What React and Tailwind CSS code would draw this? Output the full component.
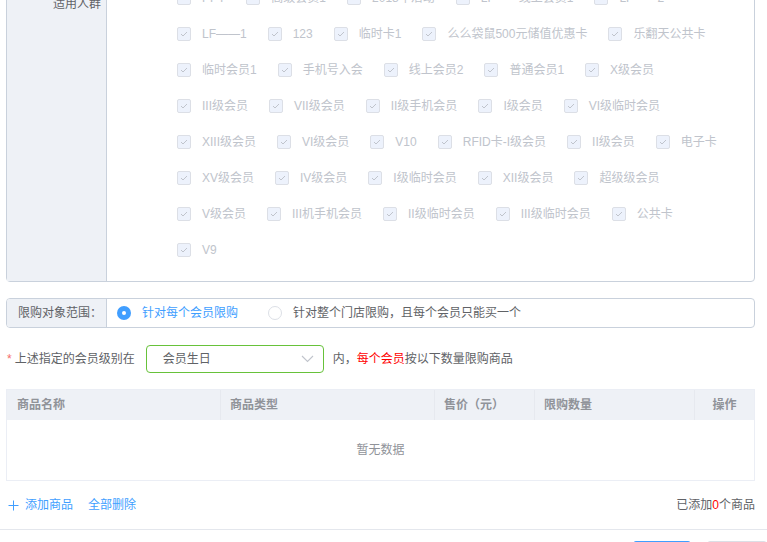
const FONT = { fontFamily: '"Liberation Sans", "Noto Sans CJK SC", sans-serif' };

const rows = [
  ["PPT", "高级会员1", "2018年活动", "LF——线上会员1", "LF——2"],
  ["LF——1", "123", "临时卡1", "么么袋鼠500元储值优惠卡", "乐翻天公共卡"],
  ["临时会员1", "手机号入会", "线上会员2", "普通会员1", "X级会员"],
  ["III级会员", "VII级会员", "II级手机会员", "I级会员", "VI级临时会员"],
  ["XIII级会员", "VI级会员", "V10", "RFID卡-I级会员", "II级会员", "电子卡"],
  ["XV级会员", "IV级会员", "I级临时会员", "XII级会员", "超级级会员"],
  ["V级会员", "III机手机会员", "II级临时会员", "III级临时会员", "公共卡"],
  ["V9"],
];

const Check = ({ label }) => (
  <div className="flex items-center mr-[21px] shrink-0">
    <span className="w-[14px] h-[14px] rounded-[2px] border border-[#dcdfe6] bg-[#edf2fc] flex items-center justify-center">
      <svg width="8" height="6" viewBox="0 0 8 6" fill="none">
        <path d="M1 3l2 2 4-4" stroke="#c0c4cc" strokeWidth="1" />
      </svg>
    </span>
    <span className="ml-[11px] text-[12px] leading-[16px] text-[#c0c4cc] whitespace-nowrap">
      {label}
    </span>
  </div>
);

export default function App() {
  return (
    <div className="w-[767px] h-[542px] overflow-hidden bg-white" style={FONT}>
      <div className="-mt-[21px] pl-[6px] pr-[12px]">
        <div className="flex border border-[#c9d1dc] rounded-[4px]">
          <div className="w-[100px] shrink-0 bg-[#eef1f6] border-r border-[#c9d1dc] text-right pr-[5px] pt-[14px] text-[12px] leading-[20px] text-[#606266]">
            适用人群
          </div>
          <div className="flex-1 pl-[70px] pb-[13px]">
            {rows.map((r, i) => (
              <div key={i} className="h-[36px] flex items-center">
                {r.map((l) => (
                  <Check key={l} label={l} />
                ))}
              </div>
            ))}
          </div>
        </div>

        <div className="mt-[16px] h-[30px] flex border border-[#c9d1dc] rounded-[4px] overflow-hidden text-[12px]">
          <div className="w-[100px] shrink-0 bg-[#eef1f6] border-r border-[#c9d1dc] flex items-center pl-[11px] text-[#606266]">
            限购对象范围：
          </div>
          <div className="flex items-center pl-[10px]">
            <span className="w-[14px] h-[14px] rounded-full bg-[#409eff] flex items-center justify-center">
              <span className="w-[4px] h-[4px] rounded-full bg-white" />
            </span>
            <span className="ml-[11px] text-[#409eff]">针对每个会员限购</span>
            <span className="ml-[30px] w-[14px] h-[14px] rounded-full border border-[#dcdfe6] bg-white" />
            <span className="ml-[11px] text-[#606266]">针对整个门店限购，且每个会员只能买一个</span>
          </div>
        </div>

        <div className="mt-[17px] h-[28px] flex items-center text-[12px] text-[#606266]">
          <span className="text-[#f56c6c] ml-[1px] mr-[3px]">*</span>
          <span>上述指定的会员级别在</span>
          <div className="ml-[11px] w-[178px] h-[28px] border border-[#67c23a] rounded-[4px] flex items-center justify-between pl-[16px] pr-[9px]">
            <span>会员生日</span>
            <svg width="13" height="8" viewBox="0 0 13 8" fill="none">
              <path d="M1 1l5.5 5.5L12 1" stroke="#c0c4cc" strokeWidth="1.1" />
            </svg>
          </div>
          <span className="ml-[9px]">内，</span>
          <span className="text-[#ff0000]">每个会员</span>
          <span>按以下数量限购商品</span>
        </div>

        <div className="mt-[16px] border border-[#ebeef5] text-[12px]">
          <div className="h-[30px] grid grid-cols-[214px_214px_100px_160px_1fr] bg-[#eef1f6] font-bold text-[#909399]">
            <div className="flex items-center pl-[10px] border-r border-[#e6e9ef]">商品名称</div>
            <div className="flex items-center pl-[9px] border-r border-[#e6e9ef]">商品类型</div>
            <div className="flex items-center pl-[9px] border-r border-[#e6e9ef]">售价（元）</div>
            <div className="flex items-center pl-[9px] border-r border-[#e6e9ef]">限购数量</div>
            <div className="flex items-center justify-center">操作</div>
          </div>
          <div className="h-[60px] flex items-center justify-center text-[#909399]">暂无数据</div>
        </div>

        <div className="mt-[14px] h-[20px] flex items-center justify-between text-[12px]">
          <div className="flex items-center text-[#409eff]">
            <svg width="11" height="11" viewBox="0 0 11 11" className="ml-[2px]">
              <path d="M5.5 0.5v10M0.5 5.5h10" stroke="#409eff" strokeWidth="1" />
            </svg>
            <span className="ml-[6px]">添加商品</span>
            <span className="ml-[15px]">全部删除</span>
          </div>
          <div className="text-[#606266]">
            已添加<span className="text-[#ff0000]">0</span>个商品
          </div>
        </div>
      </div>

      <div className="mt-[14px] h-px bg-[#e4e7ed]" />

      <div className="mt-[11px] flex justify-end gap-[16px]">
        <div className="w-[58px] h-[28px] rounded-[3px] border border-[#409eff] bg-[#409eff]" />
        <div className="w-[60px] h-[28px] rounded-[3px] border border-[#dcdfe6] bg-white" />
      </div>
    </div>
  );
}
